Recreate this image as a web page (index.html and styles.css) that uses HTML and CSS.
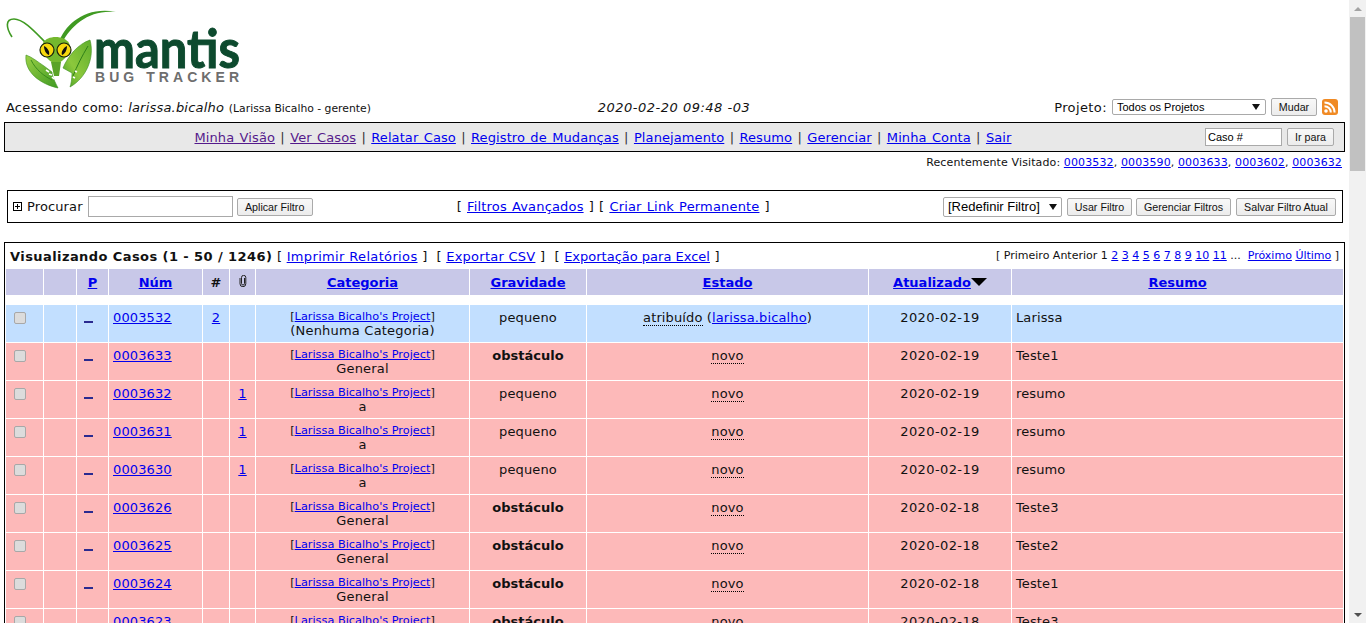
FILE: index.html
```html
<!DOCTYPE html>
<html lang="pt-BR">
<head>
<meta charset="utf-8">
<title>Visualizando Casos - MantisBT</title>
<link rel="stylesheet" href="styles.css">
</head>
<body>
<div class="app">
<main class="page">
  <header class="logo-row">
    <svg class="logo" width="245" height="98" viewBox="0 0 245 98" aria-label="Mantis Bug Tracker">
      <defs>
        <linearGradient id="leaf" x1="0" y1="0" x2="1" y2="1"><stop offset="0" stop-color="#9ad045"/><stop offset="1" stop-color="#3f9a22"/></linearGradient>
        <linearGradient id="leaf2" x1="1" y1="0" x2="0" y2="1"><stop offset="0" stop-color="#5fae2c"/><stop offset=".6" stop-color="#8cc83c"/><stop offset="1" stop-color="#3f9a22"/></linearGradient>
      </defs>
      <path d="M12,37 C6,28 5,19 14,19 C24,19 36,33 46,43" fill="none" stroke="#3f9a22" stroke-width="1.6"/>
      <path d="M59,42 C65,25 85,6 116,12 C90,9 71,25 62,43 Z" fill="#3f9a22"/>
      <path d="M26,55 C24,72 40,84 58,88 C55,82 52,76 52,72 L44,66 C38,62 32,57 26,55 Z" fill="url(#leaf)" stroke="#3b8f1e" stroke-width=".6"/>
      <path d="M31,60 C36,70 44,76 52,80" fill="none" stroke="#3a8c1c" stroke-width="1"/>
      <path d="M90,40 C78,44 68,56 63,68 L72,73 C72,79 71,84 70,87 C86,78 95,58 90,40 Z" fill="url(#leaf2)" stroke="#3b8f1e" stroke-width=".6"/>
      <path d="M88,46 C82,56 77,66 73,76" fill="none" stroke="#2f7f18" stroke-width="1"/>
      <path d="M46,70 l3,2 M49,74 l3,1 M52,77 l2,2 M75,71 l2,1 M73,77 l2,1" stroke="#fff" stroke-width="1.6"/>
      <path d="M43,43 C47,35 64,35 69,43 C73,52 62,63 56,64 C50,63 39,52 43,43 Z" fill="#74b82e"/>
      <path d="M51,62 L61,62 L59,76 L54,76 Z" fill="#5aa327"/>
      <circle cx="47" cy="50" r="7" fill="#f6d80e" stroke="#16220c" stroke-width="1.2"/>
      <circle cx="64" cy="50" r="7" fill="#f6d80e" stroke="#16220c" stroke-width="1.2"/>
      <path d="M44,46 C48,48 50,52 49,55 C46,54 44,50 44,46 Z M67,46 C63,48 61,52 62,55 C65,54 67,50 67,46 Z" fill="#111"/>
      <text class="logo-word" x="94" y="68" textLength="146" lengthAdjust="spacingAndGlyphs">mantis</text>
      <text class="logo-sub" x="95" y="82" textLength="144">BUG TRACKER</text>
    </svg>
  </header>

  <div class="info-row">
    <div class="info-user">Acessando como: <i>larissa.bicalho</i> <small>(Larissa Bicalho - gerente)</small></div>
    <div class="info-date"><i>2020-02-20 09:48 -03</i></div>
    <form class="info-project">
      <label>Projeto:</label>
      <span class="select-wrap"><select class="select project-select"><option>Todos os Projetos</option></select></span>
      <button type="button" class="btn btn-mudar">Mudar</button>
      <svg class="rss" width="16" height="16" viewBox="0 0 16 16"><rect width="16" height="16" rx="3" fill="#f08a24"/><circle cx="4" cy="12" r="1.8" fill="#fff"/><path d="M2.5,7.2 A6.3,6.3 0 0 1 8.8,13.5 M2.5,3.4 A10.1,10.1 0 0 1 12.6,13.5" fill="none" stroke="#fff" stroke-width="2"/></svg>
    </form>
  </div>

  <nav class="nav">
    <div class="nav-links">
      <a class="seen" href="#">Minha Visão</a> | <a class="seen" href="#">Ver Casos</a> | <a href="#">Relatar Caso</a> | <a href="#">Registro de Mudanças</a> | <a href="#">Planejamento</a> | <a href="#">Resumo</a> | <a href="#">Gerenciar</a> | <a href="#">Minha Conta</a> | <a href="#">Sair</a>
    </div>
    <form class="nav-jump">
      <input class="text-input jump-input" value="Caso #">
      <button type="button" class="btn btn-jump">Ir para</button>
    </form>
  </nav>

  <div class="recent">Recentemente Visitado: <a href="#">0003532</a>, <a href="#">0003590</a>, <a href="#">0003633</a>, <a href="#">0003602</a>, <a href="#">0003632</a></div>

  <section class="filter">
    <div class="filter-left">
      <svg class="plus" width="9" height="9" viewBox="0 0 9 9"><rect x=".5" y=".5" width="8" height="8" fill="#fff" stroke="#000"/><path d="M2,4.5 H7 M4.5,2 V7" stroke="#000"/></svg>
      <span class="filter-label">Procurar</span>
      <input class="text-input search-input">
      <button type="button" class="btn btn-apply">Aplicar Filtro</button>
    </div>
    <div class="filter-center">[ <a href="#">Filtros Avançados</a> ] [ <a href="#">Criar Link Permanente</a> ]</div>
    <div class="filter-right">
      <span class="select-wrap"><select class="select reset-select"><option>[Redefinir Filtro]</option></select></span>
      <button type="button" class="btn btn-use">Usar Filtro</button>
      <button type="button" class="btn btn-manage">Gerenciar Filtros</button>
      <button type="button" class="btn btn-save">Salvar Filtro Atual</button>
    </div>
  </section>

  <section class="results">
    <table class="issues">
      <colgroup>
        <col class="c1"><col class="c2"><col class="c3"><col class="c4"><col class="c5"><col class="c6"><col class="c7"><col class="c8"><col class="c9"><col class="c10"><col class="c11">
      </colgroup>
      <thead>
        <tr class="caption-row">
          <td colspan="11">
            <div class="caption">
              <div><b>Visualizando Casos (1 - 50 / 1246)</b> [ <a class="lk-print" href="#">Imprimir Relatórios</a> ] &nbsp;[ <a class="lk-csv" href="#">Exportar CSV</a> ] &nbsp;[ <a class="lk-xls" href="#">Exportação para Excel</a> ]</div>
              <div class="pager">[ Primeiro Anterior 1 <a href="#">2</a> <a href="#">3</a> <a href="#">4</a> <a href="#">5</a> <a href="#">6</a> <a href="#">7</a> <a href="#">8</a> <a href="#">9</a> <a href="#">10</a> <a href="#">11</a> ... &nbsp;<a href="#">Próximo</a> <a href="#">Último</a> ]</div>
            </div>
          </td>
        </tr>
        <tr class="head-row">
          <th></th><th></th><th><a href="#">P</a></th><th><a href="#">Núm</a></th><th>#</th>
          <th><svg class="clip" width="8" height="12" viewBox="0 0 8 12"><path d="M5.5,3 V8.5 A1.5,1.5 0 0 1 2.5,8.5 V2.5 A2,2 0 0 1 6.8,2.5 V8.8 A2.9,2.9 0 0 1 1,8.8 V3" fill="none" stroke="#222" stroke-width="1"/></svg></th>
          <th><a href="#">Categoria</a></th><th><a href="#">Gravidade</a></th><th><a href="#">Estado</a></th>
          <th class="th-sort"><a href="#">Atualizado</a><span class="sort-arrow"></span></th>
          <th><a href="#">Resumo</a></th>
        </tr>
        <tr class="spacer-row"><td colspan="11"></td></tr>
      </thead>
      <tbody>
        <tr class="assigned"><td class="mid"><input type="checkbox" class="check"></td><td></td><td class="mid"><span class="prio"></span></td><td class="num"><a href="#">0003532</a></td><td class="mid"><a href="#">2</a></td><td></td><td class="cat"><small>[<a href="#">Larissa Bicalho's Project</a>]</small><br>(Nenhuma Categoria)</td><td class="mid">pequeno</td><td class="mid"><span class="st">atribuído</span> (<a href="#">larissa.bicalho</a>)</td><td class="date">2020-02-19</td><td class="sum">Larissa</td></tr>
        <tr class="new"><td class="mid"><input type="checkbox" class="check"></td><td></td><td class="mid"><span class="prio"></span></td><td class="num"><a href="#">0003633</a></td><td></td><td></td><td class="cat"><small>[<a href="#">Larissa Bicalho's Project</a>]</small><br>General</td><td class="mid"><b>obstáculo</b></td><td class="mid"><span class="st">novo</span></td><td class="date">2020-02-19</td><td class="sum">Teste1</td></tr>
        <tr class="new"><td class="mid"><input type="checkbox" class="check"></td><td></td><td class="mid"><span class="prio"></span></td><td class="num"><a href="#">0003632</a></td><td></td><td class="mid"><a href="#">1</a></td><td class="cat"><small>[<a href="#">Larissa Bicalho's Project</a>]</small><br>a</td><td class="mid">pequeno</td><td class="mid"><span class="st">novo</span></td><td class="date">2020-02-19</td><td class="sum">resumo</td></tr>
        <tr class="new"><td class="mid"><input type="checkbox" class="check"></td><td></td><td class="mid"><span class="prio"></span></td><td class="num"><a href="#">0003631</a></td><td></td><td class="mid"><a href="#">1</a></td><td class="cat"><small>[<a href="#">Larissa Bicalho's Project</a>]</small><br>a</td><td class="mid">pequeno</td><td class="mid"><span class="st">novo</span></td><td class="date">2020-02-19</td><td class="sum">resumo</td></tr>
        <tr class="new"><td class="mid"><input type="checkbox" class="check"></td><td></td><td class="mid"><span class="prio"></span></td><td class="num"><a href="#">0003630</a></td><td></td><td class="mid"><a href="#">1</a></td><td class="cat"><small>[<a href="#">Larissa Bicalho's Project</a>]</small><br>a</td><td class="mid">pequeno</td><td class="mid"><span class="st">novo</span></td><td class="date">2020-02-19</td><td class="sum">resumo</td></tr>
        <tr class="new"><td class="mid"><input type="checkbox" class="check"></td><td></td><td class="mid"><span class="prio"></span></td><td class="num"><a href="#">0003626</a></td><td></td><td></td><td class="cat"><small>[<a href="#">Larissa Bicalho's Project</a>]</small><br>General</td><td class="mid"><b>obstáculo</b></td><td class="mid"><span class="st">novo</span></td><td class="date">2020-02-18</td><td class="sum">Teste3</td></tr>
        <tr class="new"><td class="mid"><input type="checkbox" class="check"></td><td></td><td class="mid"><span class="prio"></span></td><td class="num"><a href="#">0003625</a></td><td></td><td></td><td class="cat"><small>[<a href="#">Larissa Bicalho's Project</a>]</small><br>General</td><td class="mid"><b>obstáculo</b></td><td class="mid"><span class="st">novo</span></td><td class="date">2020-02-18</td><td class="sum">Teste2</td></tr>
        <tr class="new"><td class="mid"><input type="checkbox" class="check"></td><td></td><td class="mid"><span class="prio"></span></td><td class="num"><a href="#">0003624</a></td><td></td><td></td><td class="cat"><small>[<a href="#">Larissa Bicalho's Project</a>]</small><br>General</td><td class="mid"><b>obstáculo</b></td><td class="mid"><span class="st">novo</span></td><td class="date">2020-02-18</td><td class="sum">Teste1</td></tr>
        <tr class="new"><td class="mid"><input type="checkbox" class="check"></td><td></td><td class="mid"><span class="prio"></span></td><td class="num"><a href="#">0003623</a></td><td></td><td></td><td class="cat"><small>[<a href="#">Larissa Bicalho's Project</a>]</small><br>General</td><td class="mid"><b>obstáculo</b></td><td class="mid"><span class="st">novo</span></td><td class="date">2020-02-18</td><td class="sum">Teste3</td></tr>
      </tbody>
    </table>
  </section>
</main>
<div class="scrollbar" aria-hidden="true">
  <span class="sb-btn"><span class="sb-up"></span></span>
  <span class="sb-thumb"></span>
  <span class="sb-fill"></span>
  <span class="sb-btn"><span class="sb-down"></span></span>
</div>
</div>
</body>
</html>
```

FILE: styles.css
```css
* { box-sizing: border-box; }
html, body { margin: 0; height: 100%; overflow: hidden; background: #fff; }
body { font-family: Verdana, "DejaVu Sans", sans-serif; font-size: 13px; color: #111; }
a { color: #0000ee; }
a.seen { color: #551a8b; }

.app { display: flex; height: 100vh; overflow: hidden; }
.page { width: 1349px; flex: none; height: 100%; overflow: hidden; }

.scrollbar { width: 17px; flex: none; background: #f1f1f1; display: flex; flex-direction: column; align-items: center; }
.sb-btn { height: 17px; flex: none; display: flex; align-items: center; justify-content: center; width: 100%; }
.sb-up { border-left: 4px solid transparent; border-right: 4px solid transparent; border-bottom: 4px solid #a3a3a3; }
.sb-down { border-left: 4px solid transparent; border-right: 4px solid transparent; border-top: 4px solid #505050; }
.sb-thumb { width: 15px; height: 154px; background: #c1c1c1; flex: none; }
.sb-fill { flex: 1; }

.logo-row { height: 98px; }
.logo { display: block; }
.logo-word { font-family: Lato, "Liberation Sans", sans-serif; font-weight: 700; font-size: 54px; fill: #0d4a2e; stroke: #0d4a2e; stroke-width: 1; }
.logo-sub { font-family: "Liberation Sans", sans-serif; font-weight: 700; font-size: 14px; fill: #6e6e6e; }

.info-row { display: grid; grid-template-columns: 1fr auto 1fr; align-items: center; height: 18px; padding: 0 11px 0 6px; }
.info-user { letter-spacing: .2px; word-spacing: .4px; white-space: nowrap; }
.info-user small { font-size: 10.8px; letter-spacing: 0; word-spacing: 0; }
.info-date { letter-spacing: .5px; padding-left: 4px; }
.info-project { display: flex; align-items: center; justify-content: flex-end; }
.info-project label { margin-right: 5px; letter-spacing: .4px; }

.select-wrap { position: relative; display: block; }
.select-wrap::after { content: ""; position: absolute; right: 6px; top: 50%; margin-top: -3px; border-left: 4px solid transparent; border-right: 4px solid transparent; border-top: 6px solid #111; pointer-events: none; }
.select { display: block; appearance: none; -webkit-appearance: none; font-family: "Liberation Sans", sans-serif; font-size: 11px; height: 16px; border: 1px solid #a9a9a9; border-radius: 2px; background: #fff; color: #000; padding: 0 0 0 4px; }
.project-select { width: 154px; }
.btn { font-family: "Liberation Sans", sans-serif; font-size: 10.7px; height: 18px; padding: 0; border: 1px solid #aaa; border-radius: 2px; background: linear-gradient(#f8f8f8, #ececec); color: #111; }
.btn-mudar { width: 46px; margin-left: 5px; }
.rss { margin-left: 5px; display: block; }

.text-input { border: 1px solid #a9a9a9; font-family: "Liberation Sans", sans-serif; font-size: 11px; padding: 0 2px; background: #fff; color: #000; }

.nav { display: flex; align-items: center; margin: 6px 4px 0 4px; height: 30px; width: 1341px; border: 1px solid #000; background: #e8e8e8; }
.nav-links { flex: 1; text-align: center; color: #333; letter-spacing: .1px; word-spacing: 1.1px; padding-right: 4px; }
.nav-jump { display: flex; align-items: center; width: 139px; flex: none; }
.jump-input { width: 77px; height: 18px; }
.btn-jump { width: 47px; margin-left: 5px; }

.recent { text-align: right; font-size: 11px; padding-right: 7px; margin-top: 4px; height: 14px; line-height: 14px; letter-spacing: .12px; }

.filter { display: flex; align-items: center; margin: 20px 7px 0; width: 1336px; height: 33px; border: 1px solid #000; padding: 0 6px 0 5px; }
.filter-left { display: flex; align-items: center; flex: none; }
.plus { display: block; }
.filter-label { margin-left: 5px; letter-spacing: .12px; }
.search-input { width: 145px; height: 21px; margin-left: 5px; }
.btn-apply { width: 76px; margin-left: 4px; }
.filter-center { margin-left: 144px; white-space: nowrap; letter-spacing: .17px; word-spacing: .8px; }
.filter-right { margin-left: auto; display: flex; align-items: center; }
.reset-select { width: 119px; height: 20px; font-size: 13px; margin-right: 5px; }
.filter-right .select-wrap::after { right: 10px; }
.btn-use { width: 65px; margin-right: 4px; }
.btn-manage { width: 95px; margin-right: 5px; }
.btn-save { width: 100px; }

.results { margin: 19px 0 0 4px; width: 1341px; border: 1px solid #000; border-bottom: 0; }
.issues { width: 1339px; table-layout: fixed; border-collapse: separate; border-spacing: 1px; }
.c1 { width: 37px; } .c2 { width: 32px; } .c3 { width: 31px; } .c4 { width: 93px; } .c5 { width: 26px; } .c6 { width: 25px; }
.c7 { width: 213px; } .c8 { width: 116px; } .c9 { width: 281px; } .c10 { width: 142px; } .c11 { width: 331px; }
.issues td, .issues th { padding: 0; }

.caption-row td { height: 24px; }
.caption { display: flex; justify-content: space-between; align-items: center; padding: 0 4px; white-space: nowrap; word-spacing: .5px; }
.caption b { letter-spacing: .42px; word-spacing: 0; }
.caption a { word-spacing: 0; }
.lk-print { letter-spacing: .35px; }
.lk-csv { letter-spacing: .25px; }
.pager { font-size: 11px; word-spacing: 0; padding-bottom: 2px; }

.head-row th { height: 26px; background: #c8c8e8; text-align: center; font-size: 13px; vertical-align: middle; color: #111; }
.clip { display: block; margin: -2px auto 0; }
.th-sort { white-space: nowrap; }
.sort-arrow { display: inline-block; width: 0; height: 0; border-left: 8px solid transparent; border-right: 8px solid transparent; border-top: 8px solid #000; vertical-align: 1px; }
.spacer-row td { height: 8px; }

.issues tbody td { height: 37px; vertical-align: top; padding-top: 5px; line-height: 16px; text-align: center; letter-spacing: .12px; }
.assigned td { background: #c2dfff; }
.new td { background: #fdb9b9; }
.issues tbody .num { text-align: left; padding-left: 4px; }
.issues tbody .sum { text-align: left; padding-left: 4px; }
.issues tbody .date { letter-spacing: .4px; }
.issues tbody .cat { padding-top: 4px; line-height: 14px; letter-spacing: .2px; }
.cat small { font-size: 11.3px; letter-spacing: 0; }
.issues tbody b { letter-spacing: 0; }
.st { border-bottom: 1px dotted #000; }
.check { appearance: none; -webkit-appearance: none; display: block; width: 12px; height: 12px; margin: 2px 0 0 8px; border: 1px solid #a8a8a8; border-radius: 2px; background: #dcdcdc; }
.prio { display: block; width: 9px; height: 2px; background: #2a2a90; margin: 11px 0 0 7px; }
```
